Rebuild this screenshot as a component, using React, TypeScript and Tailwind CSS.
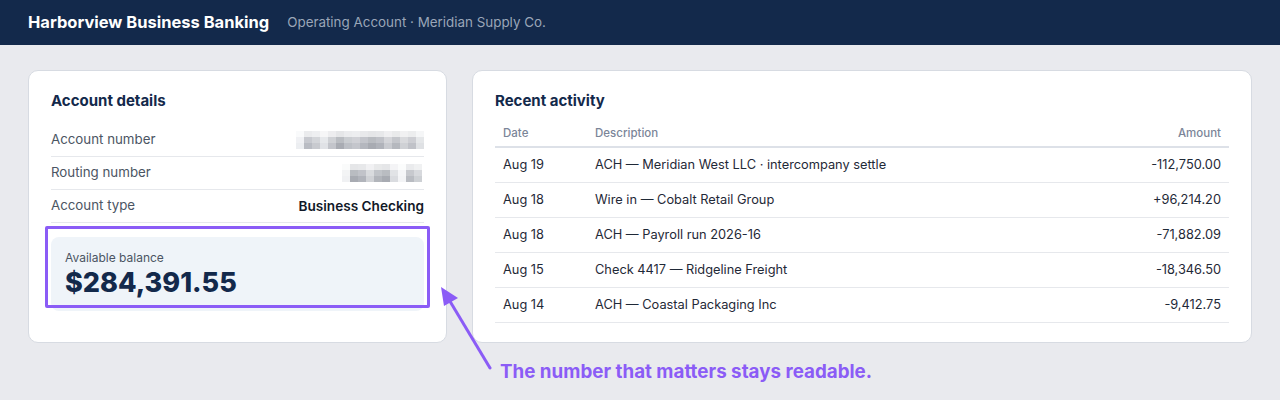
import React from 'react';

const rows = [
  { date: 'Aug 19', desc: 'ACH — Meridian West LLC · intercompany settle', amount: '-112,750.00' },
  { date: 'Aug 18', desc: 'Wire in — Cobalt Retail Group', amount: '+96,214.20' },
  { date: 'Aug 18', desc: 'ACH — Payroll run 2026-16', amount: '-71,882.09' },
  { date: 'Aug 15', desc: 'Check 4417 — Ridgeline Freight', amount: '-18,346.50' },
  { date: 'Aug 14', desc: 'ACH — Coastal Packaging Inc', amount: '-9,412.75' },
];

// pixelated blur blocks standing in for masked numbers
const Masked = ({ cells }: { cells: string[] }) => (
  <div className="flex flex-col">
    <div className="flex">
      {cells.map((c, i) => (
        <span key={'a' + i} className="w-[8px] h-[6px]" style={{ backgroundColor: c, opacity: 0.3 }} />
      ))}
    </div>
    <div className="flex">
      {cells.map((c, i) => (
        <span key={'b' + i} className="w-[8px] h-[6px]" style={{ backgroundColor: c, opacity: 0.8 }} />
      ))}
    </div>
    <div className="flex">
      {cells.map((c, i) => (
        <span key={'c' + i} className="w-[8px] h-[6px]" style={{ backgroundColor: c }} />
      ))}
    </div>
  </div>
);

const acctCells = ['#eceef1', '#b9bcc3', '#c8cacf', '#e0e2e6', '#c3c5cb', '#a9acb3', '#bdc0c6', '#c4c6cc', '#b4b7be', '#a8abb2', '#b0b3ba', '#c9cbd0', '#b5b8be', '#cfd1d5', '#c0c2c8', '#dfe1e4'];
const routeCells = ['#f0f1f3', '#a8abb2', '#b1b4bb', '#d0d2d6', '#b2b5bb', '#a8abb2', '#dadce0', '#f3f4f6', '#b9bcc2', '#cdd0d4'];

export default function App() {
  return (
    <div className="min-h-[400px] bg-[#e9eaee] relative" style={{ fontFamily: 'Inter, "Noto Sans", sans-serif' }}>
      <header className="h-[45px] bg-[#13294b] flex items-center px-7 gap-[18px]">
        <span className="text-white font-bold text-[16.5px]">Harborview Business Banking</span>
        <span className="text-[#9aa6b8] text-[13.4px]">Operating Account · Meridian Supply Co.</span>
      </header>

      <main className="grid grid-cols-[419px_1fr] gap-[25px] px-7 pt-[25px]">
        <section className="bg-white border border-[#d7dbe2] rounded-[10px] px-[22px] pt-5 pb-5">
          <h2 className="text-[15px] leading-5 font-bold text-[#13294b]">Account details</h2>
          <div className="mt-[13px] text-[13.3px]">
            <div className="h-[33px] flex items-center justify-between border-b border-[#e6e8ec]">
              <span className="text-[#4b5563]">Account number</span>
              <Masked cells={acctCells} />
            </div>
            <div className="h-[33px] flex items-center justify-between border-b border-[#e6e8ec]">
              <span className="text-[#4b5563]">Routing number</span>
              <div className="pr-[2px]"><Masked cells={routeCells} /></div>
            </div>
            <div className="h-[33px] flex items-center justify-between border-b border-[#e6e8ec]">
              <span className="text-[#4b5563]">Account type</span>
              <span className="font-semibold text-[#111827] text-[13.6px]">Business Checking</span>
            </div>
          </div>
          <div className="relative mt-[14px] bg-[#eff4f9] rounded-[8px] px-[14px] pt-[13px] pb-[13px]">
            <div className="text-[12px] leading-4 text-[#4b5563]">Available balance</div>
            <div className="text-[27px] leading-[30px] font-extrabold text-[#13294b] mt-[2px]">$284,391.55</div>
            <div className="absolute left-[-6px] right-[-6px] top-[-11px] bottom-[3px] border-[3px] border-[#8b5cf6] rounded-[2px]" />
          </div>
        </section>

        <section className="bg-white border border-[#d7dbe2] rounded-[10px] px-[22px] pt-5 pb-[19px]">
          <h2 className="text-[15px] leading-5 font-bold text-[#13294b]">Recent activity</h2>
          <table className="w-full mt-[10px] text-[12.8px]">
            <thead>
              <tr className="border-b-2 border-[#dde1e8]">
                <th className="h-[26px] w-[92px] px-2 text-left font-medium text-[11.5px] text-[#7b8598]">Date</th>
                <th className="px-2 text-left font-medium text-[11.5px] text-[#7b8598]">Description</th>
                <th className="px-2 text-right font-medium text-[11.5px] text-[#7b8598]">Amount</th>
              </tr>
            </thead>
            <tbody>
              {rows.map((r, i) => (
                <tr key={i} className="border-b border-[#e6e8ec] text-[#1f2937]">
                  <td className="h-[35px] px-2">{r.date}</td>
                  <td className="px-2">{r.desc}</td>
                  <td className="px-2 text-right">{r.amount}</td>
                </tr>
              ))}
            </tbody>
          </table>
        </section>
      </main>

      <svg className="absolute left-[430px] top-[280px]" width="80" height="100" viewBox="0 0 80 100">
        <line x1="60" y1="88" x2="18" y2="18" stroke="#8b5cf6" strokeWidth="3" strokeLinecap="round" />
        <polygon points="11,7 28,18 14,26" fill="#8b5cf6" />
      </svg>
      <div className="absolute left-[500px] top-[360px] text-[18.8px] leading-6 font-bold text-[#8b5cf6]">
        The number that matters stays readable.
      </div>
    </div>
  );
}
